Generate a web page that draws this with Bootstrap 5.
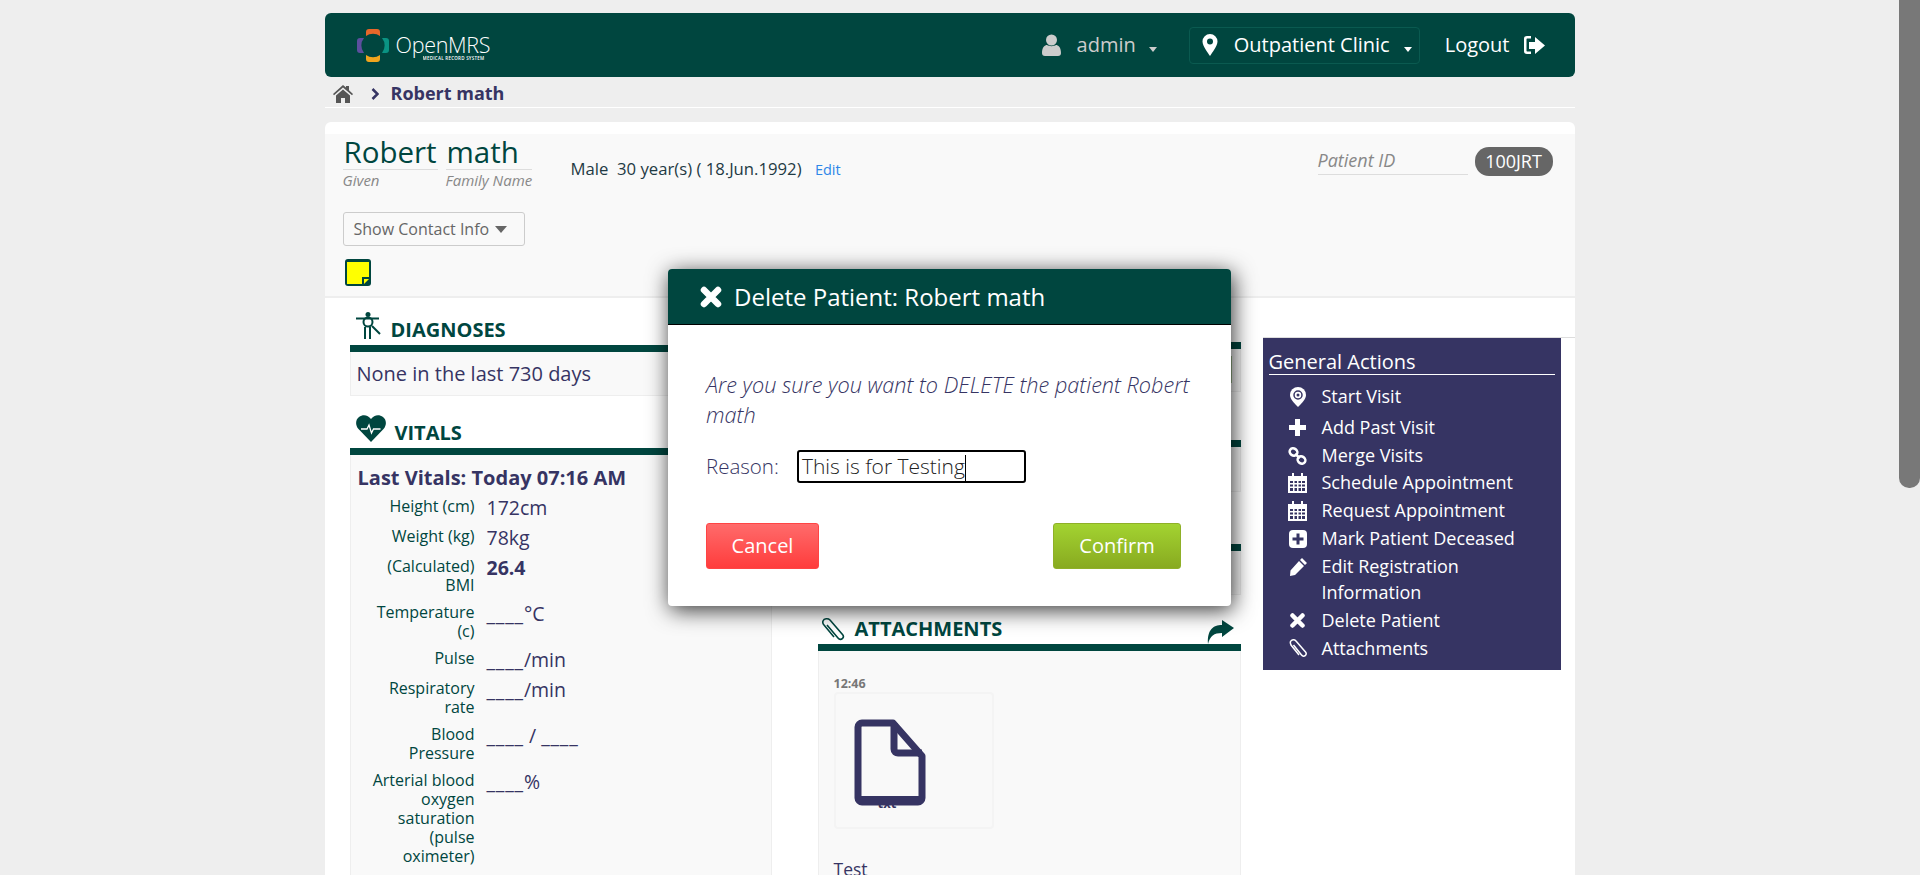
<!DOCTYPE html>
<html lang="en">
  <head>
    <meta charset="utf-8" />
    <title>OpenMRS - Robert math</title>
    <link href="https://cdn.jsdelivr.net/npm/bootstrap@5.3.0/dist/css/bootstrap.min.css" rel="stylesheet" />
    <style>
      body { background: #eee; font-family: "Open Sans", sans-serif; color: #363463; font-size: 16px; padding-right: 21px; }
      .emr-thumb { position: fixed; top: 0; right: 0; width: 21px; height: 488px; background: #787878; border-radius: 0 0 10px 10px; }
      .emr-page { width: 1250px; margin: 0 auto; padding-top: 13px; }
      .emr-top { background: #00463f; height: 64px; border-radius: 6px; padding: 0 30px 0 32px; color: #fff; }
      .emr-logo-text { width: 92px; padding-top: 4px; }
      .emr-logo-name { font-size: 21.5px; font-weight: 300; line-height: 21px; white-space: nowrap; letter-spacing: -.3px; }
      .emr-logo-sub { font-size: 4.5px; line-height: 5px; width: 65px; margin-left: 27px; margin-top: 1px; white-space: nowrap; overflow: hidden; letter-spacing: .25px; font-weight: 600; }
      .emr-admin { color: #ccc; font-size: 20px; margin-right: 32px; }
      .emr-loc { border: 1px solid #0a5a50; border-radius: 4px; height: 37px; width: 231px; padding: 0 7px 0 12px; font-size: 20px; margin-right: 25px; white-space: nowrap; }
      .emr-logout { font-size: 20px; }
      .emr-caret { display: inline-block; border: 4.5px solid transparent; border-top: 5px solid currentColor; border-bottom: 0; }
      .emr-admin .emr-caret { margin-left: 13px; }
      .emr-crumbs { height: 31px; border-bottom: 1px solid #fff; padding: 3px 0 0 8px; font-weight: 700; font-size: 18px; margin-bottom: 14px; }
      .emr-card { background: #fff; border-radius: 6px 6px 0 0; padding-top: 12px; min-height: 1447px; }
      .emr-patient { background: #f9f9f9; height: 164px; border-bottom: 2px solid #eee; padding-left: 18px; padding-right: 22px; position: relative; }
      .emr-given { width: 95px; margin-right: 8px; }
      .emr-family { width: 86px; }
      .emr-name-part { border-bottom: 1px solid #ddd; font-size: 29.5px; line-height: 35px; height: 36px; color: #00463f; padding-left: 1px; white-space: nowrap; }
      .emr-hint { color: #888; font-style: italic; font-size: 15px; line-height: 20px; white-space: nowrap; }
      .emr-demog { font-size: 16.7px; color: #1f3a44; margin-left: 39px; padding-top: 22px; }
      .emr-demog a { color: #2d87e8; font-size: 14.5px; text-decoration: none; margin-left: 9px; }
      .emr-contact { border: 1px solid #ccc; border-radius: 3px; background: #f9f9f9; color: #666; width: 182px; height: 34px; font-size: 16px; padding: 0 10px; margin-top: 22px; }
      .emr-contact .emr-caret { border-width: 7px 6px 0; margin-left: 6px; }
      .emr-note { display: block; margin-top: 13px; margin-left: 2px; }
      .emr-pid { position: absolute; top: 13px; right: 22px; }
      .emr-pid-label { width: 150px; border-bottom: 1px solid #ddd; color: #888; font-style: italic; font-size: 18px; line-height: 26px; height: 28px; margin-right: 7px; }
      .emr-pid-value { background: #666; color: #fff; border-radius: 14px; height: 29px; line-height: 29px; width: 78px; text-align: center; font-size: 18px; }
      .emr-cols { padding-left: 25px; gap: 46px; }
      .emr-col { width: 423px; flex: none; }
      .emr-col-main { width: 422px; padding-top: 14px; }
      .emr-head { border-bottom: 7px solid #00463f; color: #00463f; font-weight: 700; font-size: 20px; text-transform: uppercase; line-height: 26px; padding: 2px 0 0 6px; height: 40px; }
      .emr-head svg { flex: none; }
      .emr-bar { border-bottom: 7px solid #00463f; height: 7px; }
      .emr-lift { margin-top: -8px; }
      .emr-share { margin: 6px 7px 0 auto; }
      .emr-box { background: #f9f9f9; border: 1px solid #eee; border-top: 0; }
      .emr-none { height: 44px; line-height: 44px; font-size: 20px; padding-left: 6px; margin-bottom: 19px; }
      .emr-vitals { padding: 10px 7px 0; min-height: 700px; }
      .emr-vitals-title { font-weight: 700; font-size: 20px; line-height: 26px; margin-bottom: 6px; white-space: nowrap; }
      .emr-vital { margin-bottom: 8px; }
      .emr-vital-label { width: 117px; padding-left: 9px; flex: none; text-align: right; font-size: 16px; line-height: 19px; color: #00463f; }
      .emr-vital-value { font-size: 19.5px; line-height: 22px; margin-left: 12px; white-space: pre; }
      .emr-blank { letter-spacing: .8px; }
      .emr-sliver { width: 20px; height: 27px; background: #9ebb8f; margin: 7px 8px 0 0; }
      .emr-time { font-size: 12.5px; font-weight: 700; color: #777; line-height: 16px; }
      .emr-tile { width: 160px; height: 137px; border: 2px solid #f4f4f4; border-radius: 4px; position: relative; }
      .emr-tile svg { position: absolute; left: 18px; top: 25px; }
      .emr-ext { position: absolute; left: 42px; top: 102px; font-weight: 700; font-size: 13px; line-height: 14px; }
      .emr-file-name { margin-top: 29px; font-size: 17.5px; line-height: 22px; }
      .emr-actions-wrap { flex: 1; margin-left: -24px; margin-top: 39px; border-top: 1px solid #ddd; }
      .emr-actions { width: 298px; height: 332px; background: #363463; color: #fff; padding: 11px 6px 0; }
      .emr-actions-title { font-size: 20px; line-height: 25px; border-bottom: 1px solid #fff; height: 26px; margin-bottom: 8px; }
      .emr-action { font-size: 18px; line-height: 27px; margin-bottom: 1px; }
      .emr-action-first { margin-bottom: 4px; }
      .emr-action-tight { margin-bottom: 0; }
      .emr-action-wrap { line-height: 26px; margin-bottom: 1px; }
      .emr-action-icon { width: 24px; margin-left: 17px; margin-right: 12px; flex: none; height: 27px; }
      .emr-dialog { position: absolute; left: 668px; top: 269px; width: 563px; height: 337px; background: #fff; border-radius: 4px; box-shadow: 2px 4px 22px rgba(0, 0, 0, .8); }
      .emr-dialog-head { background: #00463f; color: #fff; height: 56px; border-bottom: 1px solid #000; border-radius: 4px 4px 0 0; font-size: 24px; padding-left: 32px; }
      .emr-dialog-body { padding: 45px 38px 0; }
      .emr-question { font-style: italic; font-size: 21.7px; line-height: 30px; font-weight: 300; margin-bottom: 20px; }
      .emr-reason { font-size: 20.5px; font-weight: 300; }
      .emr-input { width: 229px; height: 33px; border: 2px solid #000; border-radius: 3px; margin-left: 18px; font-size: 21px; color: #222; padding-left: 3px; line-height: 28px; font-weight: 300; white-space: nowrap; }
      .emr-input i { display: inline-block; width: 1px; height: 27px; background: #000; vertical-align: middle; }
      .emr-btns { margin-top: 40px; margin-right: 12px; }
      .emr-btn { height: 46px; border-radius: 3px; color: #fff; font-size: 20px; border: 1px solid; text-align: center; line-height: 44px; }
      .emr-cancel { width: 113px; background: linear-gradient(#ff6b6b, #ff3c3c); border-color: #f44; }
      .emr-confirm { width: 128px; background: linear-gradient(#a3d331, #88aa20); border-color: #8fb028; }
    </style>
  </head>
  <body>
    <div class="emr-thumb"></div>
    <div class="emr-page">
      <nav class="emr-top d-flex align-items-center">
        <div class="d-flex align-items-center">
          <svg width="32" height="33" viewBox="0 0 32 33" style="margin-right: 7px">
            <path d="M9 3a3 3 0 0 1 3-3h8a3 3 0 0 1 3 3v4A12 12 0 0 0 9 7z" fill="#e8672a" />
            <path d="M25 9h4a3 3 0 0 1 3 3v9a3 3 0 0 1-3 3h-4a12 12 0 0 0 0-15z" fill="#0a9383" />
            <path d="M9 26a12 12 0 0 0 14 0v4a3 3 0 0 1-3 3h-8a3 3 0 0 1-3-3z" fill="#f0a51e" />
            <path d="M7 9H3a3 3 0 0 0-3 3v9a3 3 0 0 0 3 3h4a12 12 0 0 1 0-15z" fill="#5c4f9e" />
          </svg>
          <div class="emr-logo-text">
            <div class="emr-logo-name">OpenMRS</div>
            <div class="emr-logo-sub">MEDICAL RECORD SYSTEM</div>
          </div>
        </div>
        <div class="ms-auto d-flex align-items-center">
          <div class="emr-admin d-flex align-items-center">
            <svg width="19" height="22" viewBox="0 0 19 22" fill="#ccc" class="me-3">
              <circle cx="9.5" cy="6" r="5.5" />
              <path d="M0 19c0-6 3-8 5-8 2 1.500 7 1.500 9 0 2 0 5 2 5 8 0 2-1 3-3 3H3c-2 0-3-1-3-3z" />
            </svg>
            <span>admin</span><span class="emr-caret mt-2"></span>
          </div>
          <div class="emr-loc d-flex align-items-center">
            <svg width="16" height="22" viewBox="0 0 16 22" class="me-3">
              <path fill="#fff" fill-rule="evenodd" d="M8 0a7.500 7.500 0 0 1 7.500 7.500C15.500 12 10 19 8 22 6 19 .5 12 .5 7.500A7.500 7.500 0 0 1 8 0zm0 4.500a3 3 0 1 0 0 6 3 3 0 0 0 0-6z" />
            </svg>
            <span>Outpatient Clinic</span><span class="emr-caret ms-auto mt-2 text-white"></span>
          </div>
          <div class="emr-logout d-flex align-items-center">
            <span>Logout</span>
            <svg width="22" height="21" viewBox="0 0 22 21" fill="#fff" style="margin-left: 13px">
              <path d="M8 1H4C2 1 1 2 1 4v12c0 2 1 3 3 3h4v-2.500H4.500c-.7 0-1-.3-1-1v-11c0-.7.3-1 1-1H8z" />
              <path d="M12 2l10 8.500L12 19v-5H6V7h6z" />
            </svg>
          </div>
        </div>
      </nav>

      <div class="emr-crumbs d-flex align-items-center">
        <svg width="20" height="18" viewBox="0 0 20 18" fill="#555">
          <path d="M10 0l3 2.500V1h3v4.200L20 9l-1 1.200L10 2.500 1 10.200 0 9z" />
          <path d="M3 10.500L10 4.500l7 6V18h-5v-5H8v5H3z" />
        </svg>
        <svg width="8" height="12" viewBox="0 0 8 12" fill="none" stroke="#363463" stroke-width="2.500" style="margin: 0 12px 0 18px">
          <path d="M1.500 1l5 5-5 5" />
        </svg>
        <span>Robert math</span>
      </div>

      <div class="emr-card">
        <section class="emr-patient">
          <div class="d-flex">
            <div class="d-flex">
              <div class="emr-given">
                <div class="emr-name-part">Robert</div>
                <div class="emr-hint">Given</div>
              </div>
              <div class="emr-family">
                <div class="emr-name-part">math</div>
                <div class="emr-hint">Family Name</div>
              </div>
            </div>
            <div class="emr-demog">Male&nbsp; 30 year(s) ( 18.Jun.1992) <a href="#">Edit</a></div>
          </div>
          <div class="emr-contact d-flex align-items-center"><span>Show Contact Info</span><span class="emr-caret"></span></div>
          <svg class="emr-note" width="26" height="27" viewBox="0 0 26 27">
            <rect width="26" height="27" rx="3" fill="#00463f" />
            <path d="M2 3h22v17l-5 5H2z" fill="#ff0" />
            <path d="M18 25v-6h6" fill="none" stroke="#00463f" stroke-width="2" />
          </svg>
          <div class="emr-pid d-flex">
            <div class="emr-pid-label">Patient ID</div>
            <div class="emr-pid-value">100JRT</div>
          </div>
        </section>

        <div class="d-flex emr-cols">
          <div class="emr-col emr-col-main">
            <div class="emr-head d-flex align-items-center">
              <svg width="25" height="27" viewBox="0 0 25 27" class="emr-lift" fill="none" stroke="#00463f" stroke-width="2" style="margin-right: 10px">
                <circle cx="12" cy="2.500" r="2.500" fill="#00463f" stroke="none" />
                <circle cx="12" cy="10" r="4.500" />
                <path d="M0 6.500h23M9 15v12M14 15v12M16 14l8 8" />
              </svg>
              <span>Diagnoses</span>
            </div>
            <div class="emr-box emr-none">None in the last 730 days</div>
            <div class="emr-head d-flex align-items-center">
              <svg width="30" height="27" viewBox="0 0 30 27" class="emr-lift" style="margin-right: 9px">
                <path fill="#00463f" d="M15 27L2.500 14C-1 10-.5 4.500 3 2c4-3 9-2 12 2 3-4 8-5 12-2 3.500 2.500 4 8 .5 12z" />
                <path fill="none" stroke="#fff" stroke-width="1.300" d="M5 14h6l2-4 2.500 8 2-4h7" />
              </svg>
              <span>Vitals</span>
            </div>
            <div class="emr-box emr-vitals">
              <div class="emr-vitals-title">Last Vitals: Today 07:16 AM</div>
              <div class="emr-vital d-flex"><div class="emr-vital-label">Height (cm)</div><div class="emr-vital-value">172cm</div></div>
              <div class="emr-vital d-flex"><div class="emr-vital-label">Weight (kg)</div><div class="emr-vital-value">78kg</div></div>
              <div class="emr-vital d-flex"><div class="emr-vital-label">(Calculated) BMI</div><div class="emr-vital-value fw-bold">26.4</div></div>
              <div class="emr-vital d-flex"><div class="emr-vital-label">Temperature (c)</div><div class="emr-vital-value"><span class="emr-blank">____</span>°C</div></div>
              <div class="emr-vital d-flex"><div class="emr-vital-label">Pulse</div><div class="emr-vital-value"><span class="emr-blank">____</span>/min</div></div>
              <div class="emr-vital d-flex"><div class="emr-vital-label">Respiratory rate</div><div class="emr-vital-value"><span class="emr-blank">____</span>/min</div></div>
              <div class="emr-vital d-flex"><div class="emr-vital-label">Blood Pressure</div><div class="emr-vital-value"><span class="emr-blank">____</span> / <span class="emr-blank">____</span></div></div>
              <div class="emr-vital d-flex"><div class="emr-vital-label">Arterial blood oxygen saturation (pulse oximeter)</div><div class="emr-vital-value"><span class="emr-blank">____</span>%</div></div>
            </div>
          </div>

          <div class="emr-col">
            <div class="emr-bar" style="height: 51px"></div>
            <div class="emr-box d-flex justify-content-end" style="height: 43px; margin-bottom: 48px">
              <div class="emr-sliver"></div>
            </div>
            <div class="emr-bar"></div>
            <div class="emr-box" style="height: 45px; margin-bottom: 52px"></div>
            <div class="emr-bar"></div>
            <div class="emr-box" style="height: 44px; margin-bottom: 16px"></div>
            <div class="emr-head d-flex align-items-center" style="padding-left: 4px">
              <svg width="24" height="24" viewBox="0 0 24 24" fill="none" stroke="#00463f" stroke-width="1.600" style="margin-right: 9px">
                <path d="M6 7l11 13c3 3.500 7-.5 4.500-3.500L9 2C7 0 3 .5 2 3c-.5 1.500 0 3 1 4l10 12" transform="translate(-1 1)" />
              </svg>
              <span>Attachments</span>
              <svg width="27" height="24" viewBox="0 0 27 24" class="emr-share" fill="#00463f">
                <path d="M27 8L15 0v5C6 5 0 10 1 24c2-8 6-11 14-11v4z" />
              </svg>
            </div>
            <div class="emr-box" style="padding: 25px 15px 0; min-height: 700px">
              <div class="emr-time">12:46</div>
              <div class="emr-tile">
                <svg width="72" height="87" viewBox="0 0 72 87">
                  <path d="M8 4h31l29 33v42c0 2-2 4-4 4H8c-2 0-4-2-4-4V8c0-2 2-4 4-4z" fill="none" stroke="#363463" stroke-width="7" stroke-linejoin="round" />
                  <path d="M40 4v26c0 3 2 4 4 4h24" fill="none" stroke="#363463" stroke-width="7" />
                  <rect x="4" y="77" width="64" height="8" fill="#363463" />
                </svg>
                <div class="emr-ext">txt</div>
              </div>
              <div class="emr-file-name">Test</div>
            </div>
          </div>

          <div class="emr-actions-wrap">
            <aside class="emr-actions">
              <div class="emr-actions-title">General Actions</div>
              <div class="emr-action emr-action-first d-flex">
                <div class="emr-action-icon d-flex justify-content-center align-items-center">
                  <svg width="16" height="20" viewBox="0 0 16 20"><path fill="#fff" d="M8 20C4 16 0 12 0 8a8 8 0 0 1 16 0c0 4-4 8-8 12z" /><circle cx="8" cy="8" r="4" fill="none" stroke="#363463" stroke-width="1.500" /><circle cx="8" cy="8" r="1.500" fill="#363463" /></svg>
                </div><span>Start Visit</span>
              </div>
              <div class="emr-action d-flex">
                <div class="emr-action-icon d-flex justify-content-center align-items-center">
                  <svg width="17" height="17" viewBox="0 0 17 17" fill="none" stroke="#fff" stroke-width="5"><path d="M8.500 0v17M0 8.500h17" /></svg>
                </div><span>Add Past Visit</span>
              </div>
              <div class="emr-action emr-action-tight d-flex">
                <div class="emr-action-icon d-flex justify-content-center align-items-center">
                  <svg width="19" height="18" viewBox="0 0 19 18" fill="none" stroke="#fff" stroke-width="2.500"><ellipse cx="5.500" cy="5" rx="4" ry="3.500" transform="rotate(35 5.500 5)" /><ellipse cx="13.500" cy="13" rx="4" ry="3.500" transform="rotate(35 13.500 13)" /><path d="M7 7l5 4" /></svg>
                </div><span>Merge Visits</span>
              </div>
              <div class="emr-action d-flex">
                <div class="emr-action-icon d-flex justify-content-center align-items-center">
                  <svg width="19" height="20" viewBox="0 0 19 20" fill="#fff"><path fill-rule="evenodd" d="M0 3h4V0h2v3h7V0h2v3h4v17H0zm2 5v2h3V8zm4.500 0v2H9V8zm4 0v2h2.500V8zM14 8v2h3V8zM2 11.500v2h3v-2zm4.500 0v2H9v-2zm4 0v2h2.500v-2zm3.500 0v2h3v-2zM2 15v3h3v-3zm4.500 0v3H9v-3zm4 0v3h2.500v-3zm3.500 0v3h3v-3z" /></svg>
                </div><span>Schedule Appointment</span>
              </div>
              <div class="emr-action d-flex">
                <div class="emr-action-icon d-flex justify-content-center align-items-center">
                  <svg width="19" height="20" viewBox="0 0 19 20" fill="#fff"><path fill-rule="evenodd" d="M0 3h4V0h2v3h7V0h2v3h4v17H0zm2 5v2h3V8zm4.500 0v2H9V8zm4 0v2h2.500V8zM14 8v2h3V8zM2 11.500v2h3v-2zm4.500 0v2H9v-2zm4 0v2h2.500v-2zm3.500 0v2h3v-2zM2 15v3h3v-3zm4.500 0v3H9v-3zm4 0v3h2.500v-3zm3.500 0v3h3v-3z" /></svg>
                </div><span>Request Appointment</span>
              </div>
              <div class="emr-action d-flex">
                <div class="emr-action-icon d-flex justify-content-center align-items-center">
                  <svg width="18" height="18" viewBox="0 0 18 18"><rect width="18" height="18" rx="4" fill="#fff" /><path d="M9 3.500v11M3.500 9h11" stroke="#363463" stroke-width="3" /></svg>
                </div><span>Mark Patient Deceased</span>
              </div>
              <div class="emr-action d-flex">
                <div class="emr-action-icon d-flex justify-content-center align-items-center">
                  <svg width="18" height="18" viewBox="0 0 18 18" fill="#fff"><path d="M13 0l5 5-2 2-5-5zM10 3l5 5-9 9-5 1 .5-5.500z" /></svg>
                </div><span class="emr-action-wrap">Edit Registration Information</span>
              </div>
              <div class="emr-action d-flex">
                <div class="emr-action-icon d-flex justify-content-center align-items-center">
                  <svg width="15" height="15" viewBox="0 0 15 15" fill="none" stroke="#fff" stroke-width="4.500" stroke-linecap="round"><path d="M2.500 2.500l10 10M12.500 2.500l-10 10" /></svg>
                </div><span>Delete Patient</span>
              </div>
              <div class="emr-action d-flex">
                <div class="emr-action-icon d-flex justify-content-center align-items-center">
                  <svg width="18" height="20" viewBox="0 0 18 20" fill="none" stroke="#fff" stroke-width="1.500"><path d="M4.500 6l8 10c2.500 3 6-.5 4-3L7 2C5.500 0 2.500.5 1.500 2.500 1 4 1.500 5 2 6l8 10" /></svg>
                </div><span>Attachments</span>
              </div>
            </aside>
          </div>
        </div>
      </div>
    </div>

    <div class="emr-dialog">
      <div class="emr-dialog-head d-flex align-items-center">
        <svg width="22" height="22" viewBox="0 0 22 22" fill="none" stroke="#fff" stroke-width="6.500" stroke-linecap="round" class="me-2">
          <path d="M4 4l14 14M18 4L4 18" />
        </svg>
        <span class="ms-1">Delete Patient: Robert math</span>
      </div>
      <div class="emr-dialog-body">
        <div class="emr-question">Are you sure you want to DELETE the patient Robert math</div>
        <div class="d-flex align-items-center">
          <span class="emr-reason">Reason:</span>
          <div class="emr-input">This is for Testing<i></i></div>
        </div>
        <div class="emr-btns d-flex justify-content-between">
          <div class="emr-btn emr-cancel">Cancel</div>
          <div class="emr-btn emr-confirm">Confirm</div>
        </div>
      </div>
    </div>

    <script src="https://cdn.jsdelivr.net/npm/bootstrap@5.3.0/dist/js/bootstrap.bundle.min.js"></script>
  </body>
</html>
